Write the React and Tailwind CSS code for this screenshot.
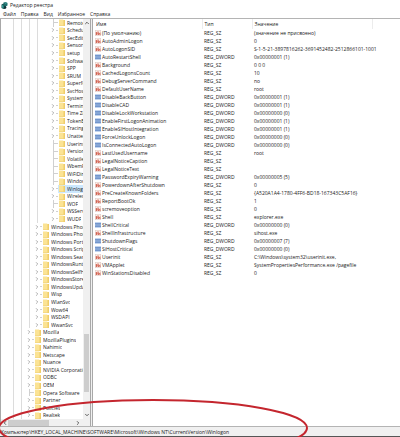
import { useState } from 'react'
import { ChevronDown, ChevronLeft, ChevronRight, ChevronUp } from 'lucide-react'

const MENU = ['Файл', 'Правка', 'Вид', 'Избранное', 'Справка']

// depth = number of guide lines left of the item, leaf = no expand arrow
const TREE = [
  { name: 'Remote', depth: 4, leaf: true },
  { name: 'Schedule', depth: 4 },
  { name: 'SecEdit', depth: 4 },
  { name: 'Sensor', depth: 4 },
  { name: 'setup', depth: 4 },
  { name: 'Software', depth: 4 },
  { name: 'SPP', depth: 4 },
  { name: 'SRUM', depth: 4 },
  { name: 'Superfetch', depth: 4 },
  { name: 'SvcHost', depth: 4 },
  { name: 'System', depth: 4 },
  { name: 'Terminal', depth: 4 },
  { name: 'Time Zones', depth: 4 },
  { name: 'TokenBr', depth: 4 },
  { name: 'Tracing', depth: 4 },
  { name: 'Unattend', depth: 4 },
  { name: 'Userinst', depth: 4, leaf: true },
  { name: 'Versions', depth: 4, leaf: true },
  { name: 'Volatile', depth: 4, leaf: true },
  { name: 'WbemPerf', depth: 4, leaf: true },
  { name: 'WiFiDirect', depth: 4, leaf: true },
  { name: 'Windows', depth: 4, leaf: true },
  { name: 'Winlogon', depth: 4 },
  { name: 'Wireless', depth: 4 },
  { name: 'WOF', depth: 4, leaf: true },
  { name: 'WSService', depth: 4 },
  { name: 'WUDF', depth: 4 },
  { name: 'Windows Phone', depth: 3 },
  { name: 'Windows Photo', depth: 3 },
  { name: 'Windows Porta', depth: 3 },
  { name: 'Windows Script', depth: 3 },
  { name: 'Windows Search', depth: 3 },
  { name: 'WindowsRuntime', depth: 3 },
  { name: 'WindowsSelfHost', depth: 3 },
  { name: 'WindowsStore', depth: 3 },
  { name: 'WindowsUpdate', depth: 3 },
  { name: 'Wisp', depth: 3 },
  { name: 'WlanSvc', depth: 3 },
  { name: 'Wow64', depth: 3 },
  { name: 'WSDAPI', depth: 3 },
  { name: 'WwanSvc', depth: 3 },
  { name: 'Mozilla', depth: 2 },
  { name: 'MozillaPlugins', depth: 2 },
  { name: 'Nahimic', depth: 2 },
  { name: 'Netscape', depth: 2 },
  { name: 'Nuance', depth: 2 },
  { name: 'NVIDIA Corporation', depth: 2 },
  { name: 'ODBC', depth: 2 },
  { name: 'OEM', depth: 2 },
  { name: 'Opera Software', depth: 2, leaf: true },
  { name: 'Partner', depth: 2 },
  { name: 'Policies', depth: 2 },
  { name: 'Realtek', depth: 2 },
]

const VALUES = [
  ['(По умолчанию)', 'REG_SZ', '(значение не присвоено)'],
  ['AutoAdminLogon', 'REG_SZ', '0'],
  ['AutoLogonSID', 'REG_SZ', 'S-1-5-21-3897816262-3691452482-2512866101-1001'],
  ['AutoRestartShell', 'REG_DWORD', '0x00000001 (1)'],
  ['Background', 'REG_SZ', '0 0 0'],
  ['CachedLogonsCount', 'REG_SZ', '10'],
  ['DebugServerCommand', 'REG_SZ', 'no'],
  ['DefaultUserName', 'REG_SZ', 'root'],
  ['DisableBackButton', 'REG_DWORD', '0x00000001 (1)'],
  ['DisableCAD', 'REG_DWORD', '0x00000001 (1)'],
  ['DisableLockWorkstation', 'REG_DWORD', '0x00000000 (0)'],
  ['EnableFirstLogonAnimation', 'REG_DWORD', '0x00000001 (1)'],
  ['EnableSIHostIntegration', 'REG_DWORD', '0x00000001 (1)'],
  ['ForceUnlockLogon', 'REG_DWORD', '0x00000000 (0)'],
  ['IsConnectedAutoLogon', 'REG_DWORD', '0x00000000 (0)'],
  ['LastUsedUsername', 'REG_SZ', 'root'],
  ['LegalNoticeCaption', 'REG_SZ', ''],
  ['LegalNoticeText', 'REG_SZ', ''],
  ['PasswordExpiryWarning', 'REG_DWORD', '0x00000005 (5)'],
  ['PowerdownAfterShutdown', 'REG_SZ', '0'],
  ['PreCreateKnownFolders', 'REG_SZ', '{A520A1A4-1780-4FF6-BD18-167343C5AF16}'],
  ['ReportBootOk', 'REG_SZ', '1'],
  ['scremoveoption', 'REG_SZ', '0'],
  ['Shell', 'REG_SZ', 'explorer.exe'],
  ['ShellCritical', 'REG_DWORD', '0x00000000 (0)'],
  ['ShellInfrastructure', 'REG_SZ', 'sihost.exe'],
  ['ShutdownFlags', 'REG_DWORD', '0x00000007 (7)'],
  ['SiHostCritical', 'REG_DWORD', '0x00000000 (0)'],
  ['Userinit', 'REG_SZ', 'C:\\Windows\\system32\\userinit.exe,'],
  ['VMApplet', 'REG_SZ', 'SystemPropertiesPerformance.exe /pagefile'],
  ['WinStationsDisabled', 'REG_SZ', '0'],
]

function AppIcon() {
  return (
    <svg className="size-[7px] shrink-0" viewBox="0 0 14 14" aria-hidden="true">
      <path d="M1 5l4-2 5 2v7l-5 2-4-2z" fill="#14514f" />
      <path d="M5 1l5-1 3 2v5l-4 2-4-3z" fill="#1d6f6c" />
      <path d="M2 6l3 1v5l-3-1z" fill="#3ba6a0" />
      <path d="M8 2l3-1 1 1-3 1z" fill="#7fd0ca" />
      <path d="M7 8l4 2-1 3-4 1z" fill="#0b2b33" />
    </svg>
  )
}

function FolderIcon() {
  return (
    <svg className="h-[7px] w-[6px] shrink-0" viewBox="0 0 12 14" preserveAspectRatio="none" aria-hidden="true">
      <path d="M0 1h8l1 1h3v12H0z" fill="#fbe394" />
      <path d="M9 2h3v12H9z" fill="#f0cd68" />
      <path d="M0 13h12v1H0z" fill="#efcf74" />
    </svg>
  )
}

function ValueIcon({ type }) {
  if (type === 'REG_DWORD') {
    return (
      <svg className="size-[6px] shrink-0" viewBox="0 0 12 12" aria-hidden="true">
        <rect width="12" height="12" fill="#c3d5ef" />
        <path d="M1 2h2v3H1zM5 2h2v3H5zM9 2h2v3H9zM1 7h2v3H1zM5 7h2v3H5zM9 7h2v3H9z" fill="#2457a8" />
        <path d="M1 6h10" stroke="#4a78bd" />
      </svg>
    )
  }
  return (
    <svg className="size-[6px] shrink-0" viewBox="0 0 12 12" aria-hidden="true">
      <rect x=".5" y=".5" width="11" height="11" fill="#fbeeea" stroke="#dcc5c0" />
      <path d="M1.500 5H4v4H2V7h2M6 2.500V9h2V6H6M11 6H9.500v3H11" fill="none" stroke="#c8432f" strokeWidth="1.300" />
    </svg>
  )
}

function TreeItem({ item, selected, onSelect }) {
  return (
    <li role="treeitem" aria-selected={selected} className="flex min-h-0 flex-1 items-center">
      {Array.from({ length: item.depth }).map((_, i) => (
        <span key={i} className="w-2 shrink-0 self-stretch border-r border-[#dcdcdc]" />
      ))}
      {/* the deepest level hangs one step further in */}
      <span className={`flex shrink-0 items-center self-stretch ${item.depth === 4 ? 'w-5 pl-3' : 'w-3 pl-1'}`}>
        {item.leaf ? (
          <span className="ml-[3px] flex flex-1 items-center self-stretch border-l border-[#d0d0d0]">
            <span className="h-px flex-1 bg-[#d0d0d0]" />
          </span>
        ) : (
          <>
            <ChevronRight className="size-[6px] shrink-0 text-[#666]" />
            <span className="h-px flex-1 bg-[#d0d0d0]" />
          </>
        )}
      </span>
      <button
        type="button"
        onClick={() => onSelect(item.name)}
        className={`flex h-full min-w-0 flex-1 items-center gap-[2px] pl-px text-left ${selected ? 'bg-[#cce8ff]' : ''}`}
      >
        <FolderIcon />
        <span className="overflow-hidden">{item.name}</span>
      </button>
    </li>
  )
}

function TreePane({ selected, onSelect }) {
  return (
    <nav aria-label="Разделы" className="flex w-[91px] shrink-0 flex-col border-x border-[#a8a8a8] bg-white">
      <div className="flex min-h-0 flex-1">
        <ul role="tree" className="flex min-w-0 flex-1 flex-col overflow-hidden pl-[5px]">
          {TREE.map((item) => (
            <TreeItem key={item.name} item={item} selected={item.name === selected} onSelect={onSelect} />
          ))}
        </ul>
        <div className="flex w-[7px] shrink-0 flex-col items-center bg-[#f0f0f0] py-px">
          <ChevronUp className="size-[6px] shrink-0 text-[#333]" strokeWidth={3} />
          <span className="flex-[308]" />
          <span className="w-[5px] flex-[58] bg-[#cdcdcd]" />
          <span className="flex-[20]" />
          <ChevronDown className="size-[6px] shrink-0 text-[#333]" strokeWidth={3} />
        </div>
      </div>
      <div className="flex h-[7px] shrink-0 items-center bg-[#f0f0f0] px-px">
        <ChevronLeft className="size-[6px] shrink-0 text-[#333]" strokeWidth={3} />
        <span className="h-[6px] w-[41px] bg-[#cdcdcd]" />
        <span className="flex-1" />
        <ChevronRight className="mr-2 size-[6px] shrink-0 text-[#333]" strokeWidth={3} />
      </div>
    </nav>
  )
}

function ValueTable() {
  return (
    <main className="ml-px min-w-0 flex-1 overflow-hidden border-l border-[#a8a8a8] bg-white">
      <table className="w-full table-fixed border-collapse text-left">
        <colgroup>
          <col className="w-[109px]" />
          <col className="w-[50px]" />
          <col className="w-[120px]" />
          <col />
        </colgroup>
        <thead>
          <tr className="h-[10px]">
            <th scope="col" className="border-r border-[#ececec] pl-[3px] font-normal">Имя</th>
            <th scope="col" className="border-r border-[#ececec] pl-[2px] font-normal">Тип</th>
            <th scope="col" className="border-r border-[#ececec] pl-[2px] font-normal">Значение</th>
            <td />
          </tr>
        </thead>
        <tbody>
          {VALUES.map(([name, type, data]) => (
            <tr key={name} className="h-2 whitespace-nowrap">
              <td className="pl-[2px]">
                <span className="flex items-center gap-px">
                  <ValueIcon type={type} />
                  {name}
                </span>
              </td>
              <td className="pl-[2px]">{type}</td>
              <td className="pl-[2px]">{data}</td>
              <td />
            </tr>
          ))}
        </tbody>
      </table>
    </main>
  )
}

export default function App() {
  const [selected, setSelected] = useState('Winlogon')

  return (
    <div className="relative flex h-screen flex-col overflow-hidden bg-white font-['Open_Sans','Noto_Sans',sans-serif] text-[5px] leading-[8px] whitespace-nowrap text-[#222]">
      <header className="shrink-0">
        <div className="flex h-[10px] items-center gap-[2px] pl-px">
          <AppIcon />
          <h1>Редактор реестра</h1>
        </div>
        <div role="menubar" className="flex h-2 items-center gap-[5px] pl-[3px]">
          {MENU.map((label) => (
            <button key={label} type="button" role="menuitem">
              {label}
            </button>
          ))}
        </div>
      </header>

      <div className="flex min-h-0 flex-1 border-t border-[#b4b4b4] bg-[#f0f0f0]">
        <TreePane selected={selected} onSelect={setSelected} />
        <ValueTable />
      </div>

      <footer className="flex h-[11px] shrink-0 items-center border-t border-b border-t-[#b4b4b4] border-b-[#555] bg-[#f0f0f0] pl-px">
        Компьютер\HKEY_LOCAL_MACHINE\SOFTWARE\Microsoft\Windows NT\CurrentVersion\Winlogon
      </footer>

      {/* red marker around the key path */}
      <svg className="pointer-events-none absolute bottom-0 left-0 h-[40px] w-[312px]" viewBox="0 0 312 40" aria-hidden="true">
        <ellipse cx="153" cy="31" rx="154" ry="28" fill="none" stroke="#c4262e" strokeWidth="2" />
      </svg>
    </div>
  )
}
